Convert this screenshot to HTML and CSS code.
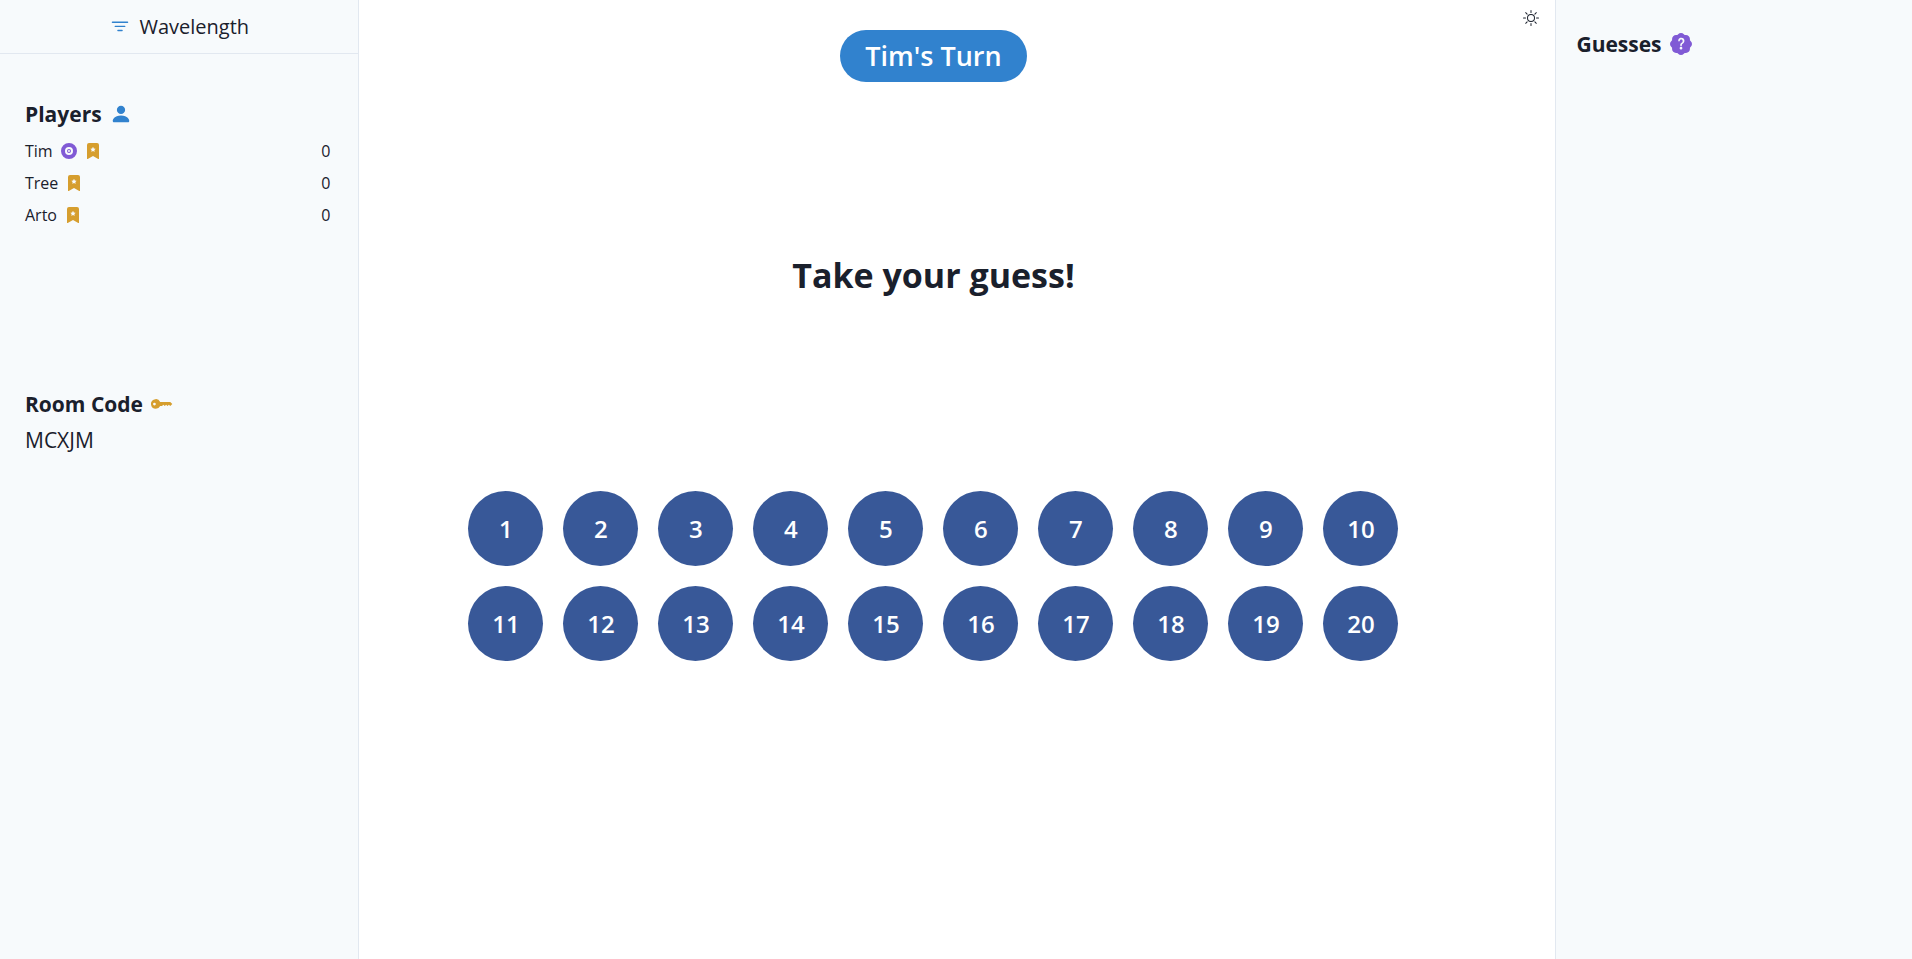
FILE: index.html
```html
<!DOCTYPE html>
<html lang="en">
<head>
<meta charset="utf-8">
<meta name="viewport" content="width=device-width, initial-scale=1">
<title>Wavelength</title>
<link rel="stylesheet" href="styles.css">
</head>
<body>
<svg class="sprite" aria-hidden="true">
  <symbol id="bookmark" viewBox="0 0 16 16"><path d="M2 15.5V2a2 2 0 0 1 2-2h8a2 2 0 0 1 2 2v13.5a.5.5 0 0 1-.74.439L8 13.069l-5.26 2.87A.5.5 0 0 1 2 15.5zM8.16 4.1a.178.178 0 0 0-.32 0l-.634 1.285a.178.178 0 0 1-.134.098l-1.42.206a.178.178 0 0 0-.098.303L6.58 6.993c.042.041.061.1.051.158L6.39 8.565a.178.178 0 0 0 .258.187l1.27-.668a.178.178 0 0 1 .165 0l1.27.668a.178.178 0 0 0 .257-.187L9.368 7.15a.178.178 0 0 1 .05-.158l1.028-1.001a.178.178 0 0 0-.098-.303l-1.42-.206a.178.178 0 0 1-.134-.098L8.16 4.1z"/></symbol>
</svg>
<div class="app">
  <aside class="sidebar">
    <header class="brand">
      <svg class="icon icon-brand blue" viewBox="0 0 16 16" aria-hidden="true"><path d="M6 10.5a.5.5 0 0 1 .5-.5h3a.5.5 0 0 1 0 1h-3a.5.5 0 0 1-.5-.5zm-2-3a.5.5 0 0 1 .5-.5h7a.5.5 0 0 1 0 1h-7a.5.5 0 0 1-.5-.5zm-2-3a.5.5 0 0 1 .5-.5h11a.5.5 0 0 1 0 1h-11a.5.5 0 0 1-.5-.5z"/></svg>
      <span>Wavelength</span>
    </header>
    <section class="players">
      <h2 class="title">Players
        <svg class="icon icon-title blue" viewBox="0 0 16 16" aria-hidden="true"><path d="M3 14s-1 0-1-1 1-4 6-4 6 3 6 4-1 1-1 1H3zm5-6a3 3 0 1 0 0-6 3 3 0 0 0 0 6z"/></svg>
      </h2>
      <ul class="player-list">
        <li class="player"><span>Tim</span>
          <svg class="icon purple" viewBox="0 0 16 16" aria-hidden="true"><path d="M8 6a2 2 0 1 0 0 4 2 2 0 0 0 0-4zm0 3a1 1 0 1 1 0-2 1 1 0 0 1 0 2z"/><path d="M16 8A8 8 0 1 1 0 8a8 8 0 0 1 16 0zM4 8a4 4 0 1 0 8 0 4 4 0 0 0-8 0z"/></svg>
          <svg class="icon gold" aria-hidden="true"><use href="#bookmark"/></svg>
          <span class="score">0</span></li>
        <li class="player"><span>Tree</span>
          <svg class="icon gold" aria-hidden="true"><use href="#bookmark"/></svg>
          <span class="score">0</span></li>
        <li class="player"><span>Arto</span>
          <svg class="icon gold" aria-hidden="true"><use href="#bookmark"/></svg>
          <span class="score">0</span></li>
      </ul>
    </section>
    <section class="room">
      <h2 class="title">Room Code
        <svg class="icon icon-title gold" viewBox="0 0 16 16" aria-hidden="true"><path d="M3.5 11.5a3.5 3.5 0 1 1 3.163-5H14L15.5 8 14 9.5l-1-1-1 1-1-1-1 1-1-1-1 1H6.663a3.5 3.5 0 0 1-3.163 2zM2.5 9a1 1 0 1 0 0-2 1 1 0 0 0 0 2z"/></svg>
      </h2>
      <p class="code">MCXJM</p>
    </section>
  </aside>
  <main class="board">
    <div class="play">
      <div class="turn">Tim's Turn</div>
      <h1 class="prompt">Take your guess!</h1>
      <div class="numbers">
        <button class="number" type="button">1</button>
        <button class="number" type="button">2</button>
        <button class="number" type="button">3</button>
        <button class="number" type="button">4</button>
        <button class="number" type="button">5</button>
        <button class="number" type="button">6</button>
        <button class="number" type="button">7</button>
        <button class="number" type="button">8</button>
        <button class="number" type="button">9</button>
        <button class="number" type="button">10</button>
        <button class="number" type="button">11</button>
        <button class="number" type="button">12</button>
        <button class="number" type="button">13</button>
        <button class="number" type="button">14</button>
        <button class="number" type="button">15</button>
        <button class="number" type="button">16</button>
        <button class="number" type="button">17</button>
        <button class="number" type="button">18</button>
        <button class="number" type="button">19</button>
        <button class="number" type="button">20</button>
      </div>
    </div>
    <button class="theme" type="button" aria-label="Toggle color mode">
      <svg class="icon" viewBox="0 0 16 16" aria-hidden="true"><path d="M8 11a3 3 0 1 1 0-6 3 3 0 0 1 0 6zm0 1a4 4 0 1 0 0-8 4 4 0 0 0 0 8zM8 0a.5.5 0 0 1 .5.5v2a.5.5 0 0 1-1 0v-2A.5.5 0 0 1 8 0zm0 13a.5.5 0 0 1 .5.5v2a.5.5 0 0 1-1 0v-2A.5.5 0 0 1 8 13zm8-5a.5.5 0 0 1-.5.5h-2a.5.5 0 0 1 0-1h2a.5.5 0 0 1 .5.5zM3 8a.5.5 0 0 1-.5.5h-2a.5.5 0 0 1 0-1h2A.5.5 0 0 1 3 8zm10.657-5.657a.5.5 0 0 1 0 .707l-1.414 1.415a.5.5 0 1 1-.707-.708l1.414-1.414a.5.5 0 0 1 .707 0zm-9.193 9.193a.5.5 0 0 1 0 .707L3.05 13.657a.5.5 0 0 1-.707-.707l1.414-1.414a.5.5 0 0 1 .707 0zm9.193 2.121a.5.5 0 0 1-.707 0l-1.414-1.414a.5.5 0 0 1 .707-.707l1.414 1.414a.5.5 0 0 1 0 .707zM4.464 4.465a.5.5 0 0 1-.707 0L2.343 3.05a.5.5 0 1 1 .707-.707l1.414 1.414a.5.5 0 0 1 0 .708z"/></svg>
    </button>
  </main>
  <aside class="guesses">
    <h2 class="title">Guesses
      <svg class="icon icon-title purple" viewBox="0 0 16 16" aria-hidden="true"><path d="M5.933.87a2.89 2.89 0 0 1 4.134 0l.622.638.89-.011a2.89 2.89 0 0 1 2.924 2.924l-.01.89.636.622a2.89 2.89 0 0 1 0 4.134l-.637.622.011.89a2.89 2.89 0 0 1-2.924 2.924l-.89-.01-.622.636a2.89 2.89 0 0 1-4.134 0l-.622-.637-.89.011a2.89 2.89 0 0 1-2.924-2.924l.01-.89-.636-.622a2.89 2.89 0 0 1 0-4.134l.637-.622-.011-.89a2.89 2.89 0 0 1 2.924-2.924l.89.01.622-.636zM7.002 11a1 1 0 1 0 2 0 1 1 0 0 0-2 0zm1.602-2.027c.04-.534.198-.815.846-1.26.674-.475 1.05-1.09 1.05-1.986 0-1.325-.92-2.227-2.262-2.227-1.02 0-1.792.492-2.1 1.29A1.71 1.71 0 0 0 6 5.48c0 .393.203.64.545.64.272 0 .455-.147.564-.51.158-.592.525-.915 1.074-.915.61 0 1.03.446 1.03 1.084 0 .563-.208.885-.822 1.325-.619.433-.926.914-.926 1.64v.111c0 .428.208.745.585.745.336 0 .504-.24.554-.627z"/></svg>
    </h2>
  </aside>
</div>
</body>
</html>
```

FILE: styles.css
```css
* { box-sizing: border-box; margin: 0; padding: 0; }

body {
  font-family: "Open Sans", "Noto Sans", sans-serif;
  font-size: 16px;
  line-height: 24px;
  color: #1a202c;
  background: #fff;
}

button { font: inherit; color: inherit; border: 0; background: none; cursor: pointer; }

.sprite { display: none; }

.app {
  display: grid;
  grid-template-columns: 18.8% 1fr 18.65%;
  min-height: 100vh;
}

.icon { width: 16px; height: 16px; flex: none; fill: currentColor; }
.icon-brand { width: 22px; height: 22px; }
.icon-title { width: 22px; height: 22px; }
.blue { color: #3182ce; }
.purple { color: #805ad5; }
.gold { color: #d69e2e; }

.sidebar { background: #f7fafc; border-right: 1px solid #e2e8f0; }

.brand {
  display: flex;
  align-items: center;
  justify-content: center;
  gap: 8px;
  height: 54px;
  border-bottom: 1px solid #e2e8f0;
  font-size: 20px;
}

.title {
  display: flex;
  align-items: center;
  gap: 8px;
  font-size: 21px;
  line-height: 32px;
  font-weight: 700;
}

.players { min-height: 334px; padding: 44px 28px 0 25px; }
.player-list { list-style: none; padding-top: 5px; }
.player { display: flex; align-items: center; gap: 8px; height: 32px; font-size: 16px; }
.score { margin-left: auto; }

.room { padding: 0 25px; }
.code { padding-top: 4px; font-size: 21px; line-height: 32px; }

.board { display: flex; align-items: flex-start; }
.play { flex: 1; display: flex; flex-direction: column; align-items: center; padding-top: 30px; }

.turn {
  padding: 0 25px;
  border-radius: 26px;
  background: #3182ce;
  color: #fff;
  font-size: 27px;
  line-height: 52px;
  font-weight: 600;
}

.prompt { padding-top: 169px; font-size: 34px; line-height: 48px; font-weight: 700; }

.numbers {
  display: grid;
  grid-template-columns: repeat(10, 75px);
  gap: 20px;
  padding-top: 192px;
}

.number {
  height: 75px;
  border-radius: 50%;
  background: #385898;
  color: #fff;
  font-size: 24px;
  font-weight: 600;
}

.theme { padding: 10px 16px; line-height: 0; }

.guesses { padding: 28px 20px; background: #f7fafc; border-left: 1px solid #e2e8f0; }
```
